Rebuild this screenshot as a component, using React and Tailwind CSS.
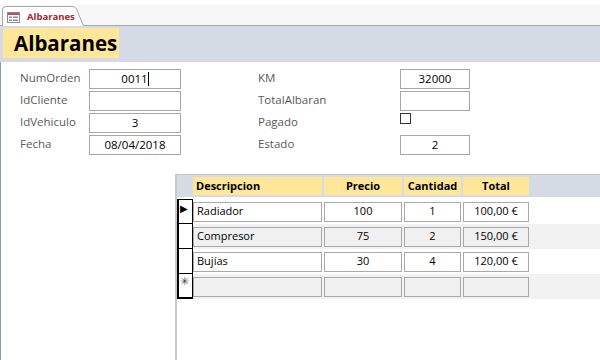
import React from 'react';

const FONT = "font-['Open_Sans',sans-serif]";

const LEFT_FIELDS = [
  { label: 'NumOrden', value: '0011', caret: true },
  { label: 'IdCliente', value: '' },
  { label: 'IdVehiculo', value: '3' },
  { label: 'Fecha', value: '08/04/2018' },
];

const RIGHT_FIELDS = [
  { label: 'KM', value: '32000' },
  { label: 'TotalAlbaran', value: '' },
  { label: 'Pagado', check: true },
  { label: 'Estado', value: '2' },
];

const LINES = [
  { desc: 'Radiador', precio: '100', cant: '1', total: '100,00 €' },
  { desc: 'Compresor', precio: '75', cant: '2', total: '150,00 €' },
  { desc: 'Bujías', precio: '30', cant: '4', total: '120,00 €' },
];

const COLS = [
  { key: 'desc', label: 'Descripcion', w: 'w-[129px]', left: true },
  { key: 'precio', label: 'Precio', w: 'w-[78px]' },
  { key: 'cant', label: 'Cantidad', w: 'w-[57px]' },
  { key: 'total', label: 'Total', w: 'w-[66px]' },
];

const FormIcon = () => (
  <svg width="13" height="11" viewBox="0 0 13 11">
    <rect x="0.5" y="0.5" width="12" height="10" fill="#fff" stroke="#8a8a9a" />
    <rect x="1" y="1" width="11" height="2" fill="#c0504d" />
    <rect x="2" y="4.5" width="3" height="1.5" fill="#7f8fa6" />
    <rect x="6" y="4.5" width="5" height="1.5" fill="#7f8fa6" />
    <rect x="2" y="7.5" width="3" height="1.5" fill="#7f8fa6" />
    <rect x="6" y="7.5" width="5" height="1.5" fill="#7f8fa6" />
  </svg>
);

const Field = ({ label, value, caret, check, labelW, inputW }) => (
  <div className="flex items-center h-[22px]">
    <span className={`${labelW} text-[11.5px] text-[#595959] leading-none -mt-[3px]`}>{label}</span>
    {check ? (
      <div className="h-[22px] pt-[1px]">
        <div className="w-[11px] h-[11px] border border-[#333] bg-white" />
      </div>
    ) : (
      <div className={`${inputW} h-[20px] border border-[#a6a6a6] bg-white flex items-center justify-center text-[11.5px] text-black`}>
        <span>{value}</span>
        {caret && <span className="w-px h-[14px] bg-black" />}
      </div>
    )}
  </div>
);

export default function App() {
  return (
    <div className={`w-[600px] h-[360px] bg-white overflow-hidden flex flex-col ${FONT}`}>
      {/* tab strip */}
      <div className="h-[21px] mt-[5px] bg-[#f7f7f7] border-b border-[#a7a7a7] flex items-end pl-[2px]">
        <div className="relative h-[20px] w-[82px] -mb-px">
          <svg className="absolute inset-0" width="82" height="20" viewBox="0 0 82 20">
            <path d="M0.5 20 V4 Q0.5 0.5 4 0.5 H70 Q73 0.5 74.5 3 L81.5 20" fill="#ffffff" stroke="#a7a7a7" />
          </svg>
          <div className="relative flex items-center gap-[7px] pl-[5px] pt-[4px]">
            <FormIcon />
            <span className="text-[9.5px] font-bold text-[#a4262c]">Albaranes</span>
          </div>
        </div>
      </div>

      {/* header band */}
      <div className="h-[36px] bg-[#d5dbe5] pl-[3px] pt-[2px]">
        <div className="w-[116px] h-[30px] bg-[#ffe699] flex items-center pl-[11px]">
          <span className="text-[20.5px] font-bold text-black leading-none">Albaranes</span>
        </div>
      </div>

      {/* body */}
      <div className="flex-1 flex flex-col border-l border-[#8e9aa8]">
        <div className="flex pt-[6px] pl-[19px]">
          <div className="flex flex-col">
            {LEFT_FIELDS.map(f => (
              <Field key={f.label} {...f} labelW="w-[69px]" inputW="w-[92px]" />
            ))}
          </div>
          <div className="flex flex-col ml-[77px]">
            {RIGHT_FIELDS.map(f => (
              <Field key={f.label} {...f} labelW="w-[142px]" inputW="w-[70px]" />
            ))}
          </div>
        </div>

        {/* subform */}
        <div className="flex-1 mt-[18px] ml-[174px] border-l-2 border-t border-[#c8c8c8] flex flex-col text-[11px]">
          <div className="h-[22px] bg-[#d5dbe5] flex items-center pl-[16px] gap-[2px]">
            {COLS.map(c => (
              <div key={c.key} className={`${c.w} h-[18px] bg-[#ffe699] font-bold text-black flex items-center ${c.left ? 'pl-[3px]' : 'justify-center'}`}>
                {c.label}
              </div>
            ))}
          </div>
          <div className="h-[2px]" />
          {[...LINES, null].map((row, i) => (
            <div key={i} className={`h-[25px] flex ${i % 2 === 1 ? 'bg-[#f2f2f2]' : 'bg-white'}`}>
              <div className={`w-[16px] bg-white border-l-2 border-r border-b border-black flex items-start ${i === 0 ? 'border-t' : ''} ${i === 3 ? 'border-b-2' : ''}`}>
                {i === 0 && <span className="text-[10px] leading-none ml-[1px] mt-[3px]">▶</span>}
                {i === 3 && <span className="text-[11px] leading-none ml-[1px] mt-[1px] text-[#444]">✳</span>}
              </div>
              <div className="flex items-center gap-[2px]">
                {COLS.map(c => (
                  <div
                    key={c.key}
                    className={`${c.w} h-[20px] border border-[#a9a9a9] flex items-center text-black ${row && i % 2 === 0 ? 'bg-white' : 'bg-[#f0f0f0]'} ${c.left ? 'pl-[3px]' : 'justify-center'}`}
                  >
                    {row ? row[c.key] : ''}
                  </div>
                ))}
              </div>
            </div>
          ))}
        </div>
      </div>
    </div>
  );
}
